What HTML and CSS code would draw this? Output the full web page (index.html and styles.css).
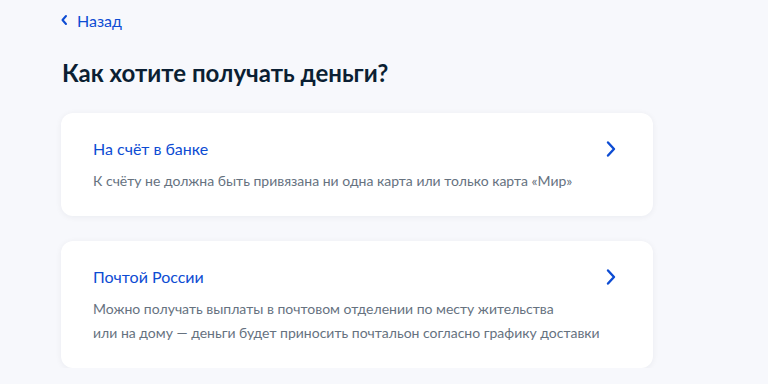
FILE: index.html
```html
<!DOCTYPE html>
<html lang="ru">
<head>
    <meta charset="UTF-8">
    <meta name="viewport" content="width=device-width, initial-scale=1.0">
    <title>Как хотите получать деньги?</title>
    <link rel="stylesheet" href="styles.css">
</head>
<body>
    <main class="page">
        <a class="back-link" href="#">
            <svg width="9" height="12" viewBox="0 0 9 12"><path d="M6 2 2.5 6 6 10" fill="none" stroke="#0d4cd3" stroke-width="2" stroke-linecap="round" stroke-linejoin="round"/></svg>
            <span>Назад</span>
        </a>

        <h1 class="page-title">Как хотите получать деньги?</h1>

        <div class="options">
            <a class="option-card" href="#">
                <div class="option-text">
                    <h3>На счёт в банке</h3>
                    <p>К счёту не должна быть привязана ни одна карта или только карта «Мир»</p>
                </div>
                <svg class="chevron" width="12" height="18" viewBox="0 0 12 18"><path d="M3 2.5 9 9l-6 6.5" fill="none" stroke="#0d4cd3" stroke-width="2.4" stroke-linecap="round" stroke-linejoin="round"/></svg>
            </a>

            <a class="option-card" href="#">
                <div class="option-text">
                    <h3>Почтой России</h3>
                    <p>Можно получать выплаты в почтовом отделении по месту жительства<br>или на дому — деньги будет приносить почтальон согласно графику доставки</p>
                </div>
                <svg class="chevron" width="12" height="18" viewBox="0 0 12 18"><path d="M3 2.5 9 9l-6 6.5" fill="none" stroke="#0d4cd3" stroke-width="2.4" stroke-linecap="round" stroke-linejoin="round"/></svg>
            </a>
        </div>
    </main>
</body>
</html>
```

FILE: styles.css
```css
body {
    margin: 0;
    padding: 0;
    font-family: Lato, 'Noto Sans', sans-serif;
    background-color: #f7f8fc;
    color: #0b1f33;
}

.page {
    padding: 9px 0 0 60px;
    width: 593px;
}

.back-link {
    display: flex;
    align-items: center;
    gap: 8px;
    height: 22px;
    color: #0d4cd3;
    text-decoration: none;
    font-size: 16px;
}

.page-title {
    margin: 26px 0 0 2px;
    font-size: 24px;
    line-height: 32px;
    font-weight: bold;
}

.options {
    display: flex;
    flex-direction: column;
    gap: 25px;
    margin-top: 24px;
}

.option-card {
    display: flex;
    justify-content: space-between;
    align-items: flex-start;
    margin-left: 1px;
    background: white;
    border-radius: 12px;
    padding: 24px 36px 23px 32px;
    box-shadow: 0 1px 6px rgba(11, 31, 51, 0.06);
    text-decoration: none;
}

.option-text h3 {
    margin: 0;
    font-size: 16px;
    line-height: 24px;
    font-weight: normal;
    color: #0d4cd3;
}

.option-text p {
    margin: 8px 0 0 0;
    font-size: 14px;
    line-height: 24px;
    color: #66727f;
}

.chevron {
    margin-top: 3px;
}
```
